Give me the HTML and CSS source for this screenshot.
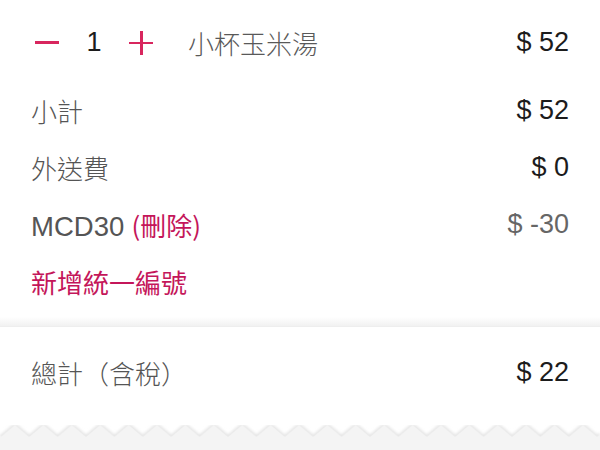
FILE: index.html
```html
<!DOCTYPE html>
<html lang="zh-Hant">
<head>
    <meta charset="UTF-8">
    <meta name="viewport" content="width=device-width, initial-scale=1.0">
    <title>Cart</title>
    <link rel="stylesheet" href="styles.css">
</head>
<body>
    <div class="receipt">
        <div class="items">
            <div class="row item-row">
                <div class="qty">
                    <span class="qty-btn minus"></span>
                    <span class="qty-num">1</span>
                    <span class="qty-btn plus"></span>
                </div>
                <span class="label item-name">小杯玉米湯</span>
                <span class="price">$ 52</span>
            </div>
        </div>

        <div class="summary">
            <div class="row">
                <span class="label">小計</span>
                <span class="price">$ 52</span>
            </div>
            <div class="row">
                <span class="label">外送費</span>
                <span class="price">$ 0</span>
            </div>
            <div class="row">
                <span class="label"><span class="code">MCD30</span> <a class="link">(刪除)</a></span>
                <span class="price muted">$ -30</span>
            </div>
            <div class="row">
                <a class="link">新增統一編號</a>
            </div>
        </div>

        <div class="divider"></div>

        <div class="total">
            <div class="row">
                <span class="label">總計（含稅）</span>
                <span class="price">$ 22</span>
            </div>
        </div>
    </div>

    <div class="zigzag">
        <svg width="600" height="25" viewBox="0 0 600 25">
            <defs>
                <filter id="soft" x="-10%" y="-50%" width="120%" height="200%">
                    <feGaussianBlur stdDeviation="1.5"/>
                </filter>
                <pattern id="teeth" width="28.4" height="25" patternUnits="userSpaceOnUse" x="0.8">
                    <polygon points="0,12 14.2,0 28.4,12 28.4,25 0,25" fill="#f4f4f4"/>
                </pattern>
                <pattern id="teeth-shadow" width="28.4" height="25" patternUnits="userSpaceOnUse" x="0.8">
                    <polyline points="0,12 14.2,0 28.4,12" fill="none" stroke="#e0e0e0" stroke-width="3"/>
                </pattern>
            </defs>
            <rect width="600" height="25" fill="url(#teeth-shadow)" filter="url(#soft)"/>
            <rect width="600" height="25" fill="url(#teeth)"/>
        </svg>
    </div>
</body>
</html>
```

FILE: styles.css
```css
body {
    margin: 0;
    background: #ffffff;
    font-family: "Liberation Sans", "Noto Sans CJK TC", sans-serif;
    overflow: hidden;
}

.receipt {
    background: #ffffff;
}

.items {
    padding: 14px 31px 0 31px;
}

.summary {
    padding: 11px 31px 7px 31px;
}

.total {
    padding: 17px 31px 24px 31px;
}

.row {
    display: flex;
    align-items: center;
    height: 57px;
}

.label {
    flex: 1;
    font-family: "Liberation Sans", "Noto Sans CJK TC", sans-serif;
    font-size: 26px;
    color: #555555;
    font-weight: 300;
}

.code {
    font-size: 27.5px;
}

.item-name {
    color: #595959;
}

.price {
    font-family: "Liberation Sans", sans-serif;
    font-size: 27px;
    color: #1c1c1c;
}

.price.muted {
    color: #666666;
}

.link {
    font-family: "Noto Sans CJK TC", sans-serif;
    font-size: 26px;
    color: #c4165a;
    font-weight: 400;
}

.qty {
    display: flex;
    align-items: center;
    width: 157px;
}

.qty-btn {
    position: relative;
    width: 24px;
    height: 24px;
}

.qty-btn::before,
.plus::after {
    content: "";
    position: absolute;
    background: #d8265e;
}

.minus {
    margin-left: 4px;
}

.minus::before {
    left: 0;
    right: 0;
    top: 10px;
    height: 3.5px;
}

.plus::before {
    left: 0;
    right: 0;
    top: 11px;
    height: 2.5px;
}

.plus::after {
    top: 0;
    bottom: 0;
    left: 11px;
    width: 2.5px;
}

.qty-num {
    font-family: "Liberation Sans", sans-serif;
    font-size: 27px;
    color: #1c1c1c;
    width: 70px;
    text-align: center;
}

.divider {
    height: 9px;
    background: linear-gradient(#ffffff, #f1f1f1);
    border-bottom: 1px solid #eeeeee;
}

.zigzag {
    height: 25px;
    background: #ffffff;
}

.zigzag svg {
    display: block;
}
```
